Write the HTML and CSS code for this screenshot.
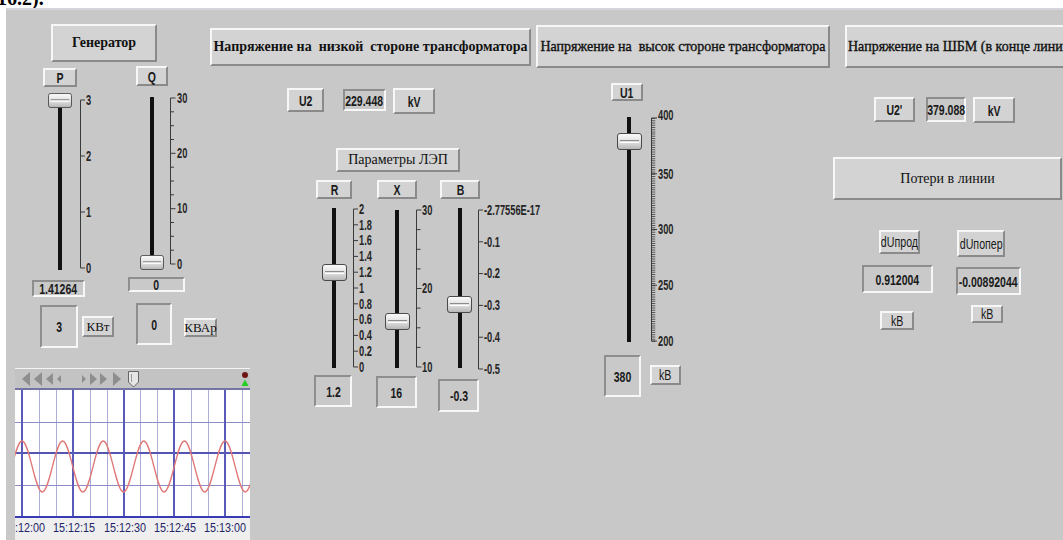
FILE: index.html
```html
<!DOCTYPE html>
<html lang="ru">
<head>
<meta charset="utf-8">
<title>Линия электропередачи — лицевая панель</title>
<link rel="stylesheet" href="styles.css">
</head>
<body>
<svg class="defs" width="0" height="0" aria-hidden="true">
  <defs>
    <linearGradient id="thumbFill" x1="0" y1="0" x2="0" y2="1">
      <stop offset="0" stop-color="#fbfbfb"/>
      <stop offset="0.55" stop-color="#dedede"/>
      <stop offset="1" stop-color="#b4b4b4"/>
    </linearGradient>
    <symbol id="thumb" viewBox="0 0 25 17" preserveAspectRatio="none">
      <rect x="0.5" y="0.5" width="24" height="16" rx="2.5" fill="url(#thumbFill)" stroke="#4a4a4a"/>
      <line x1="3" y1="7.5" x2="22" y2="7.5" stroke="#8c8c8c"/>
      <line x1="3" y1="9.5" x2="22" y2="9.5" stroke="#ffffff"/>
    </symbol>
  </defs>
</svg>

<div class="strip"><span class="fig-ref">16.2).</span></div>

<main class="panel">
  <!-- Generator: P and Q sliders, inputs and trend chart -->
  <section class="col col-gen">
    <div class="raised serif b gen-title">Генератор</div>

    <div class="gen-sliders">
      <div class="unit unit-p">
        <div class="raised narrow b tag-p"><span>P</span></div>
        <svg class="slider slider-p" width="60" height="185" viewBox="0 0 60 185">
          <line class="track" x1="20" y1="5" x2="20" y2="180"/>
          <g class="scale">
            <path d="M40.5 10V178M40.5 10H45M40.5 66H45M40.5 122H45M40.5 178H45"/>
            <text x="46" y="10">3</text>
            <text x="46" y="66">2</text>
            <text x="46" y="122">1</text>
            <text x="46" y="178">0</text>
          </g>
          <use href="#thumb" x="8" y="3" width="24" height="15"/>
        </svg>
        <div class="sunken narrow b val-p"><span>1.41264</span></div>
      </div>

      <div class="unit unit-q">
        <div class="raised narrow b tag-q"><span>Q</span></div>
        <svg class="slider slider-q" width="65" height="185" viewBox="0 0 65 185">
          <line class="track" x1="22" y1="7" x2="22" y2="172"/>
          <g class="scale">
            <path d="M40.5 8V174M40.5 8H45.5M40.5 63.3H45.5M40.5 118.7H45.5M40.5 174H45.5M40.5 21.8H44M40.5 35.7H44M40.5 49.5H44M40.5 77.2H44M40.5 91H44M40.5 104.8H44M40.5 132.5H44M40.5 146.3H44M40.5 160.2H44"/>
            <text x="47" y="8">30</text>
            <text x="47" y="63.3">20</text>
            <text x="47" y="118.7">10</text>
            <text x="47" y="174">0</text>
          </g>
          <use href="#thumb" x="10" y="165" width="24" height="15"/>
        </svg>
        <div class="sunken narrow b val-q"><span>0</span></div>
      </div>
    </div>

    <div class="gen-inputs">
      <div class="sunken narrow b in-p"><span>3</span></div>
      <div class="raised serif unit-kvt">КВт</div>
      <div class="sunken narrow b in-q"><span>0</span></div>
      <div class="raised serif unit-kvar">КВАр</div>
    </div>

    <div class="chart">
      <svg class="chart-bar" width="235" height="22" viewBox="0 0 235 22">
        <rect width="235" height="22" fill="#c3c3c3"/>
        <line x1="0" y1="0.5" x2="235" y2="0.5" stroke="#f4f4f4"/>
        <line x1="0" y1="21" x2="235" y2="21" stroke="#7474a4" stroke-width="2"/>
        <g fill="#8e8e8e">
          <polygon points="15,4 7,11 15,18"/>
          <polygon points="27,4 19,11 27,18"/>
          <polygon points="38,5 31,11 38,17"/>
          <polygon points="46,7 42,11 46,15"/>
          <polygon points="67,7 71,11 67,15"/>
          <polygon points="75,5 82,11 75,17"/>
          <polygon points="85,5 92,11 85,17"/>
          <polygon points="98,4 106,11 98,18"/>
        </g>
        <polygon points="113.5,3.5 123.5,3.5 123.5,14 118.5,19 113.5,14" fill="#e6e6e6" stroke="#666"/>
        <line x1="116.5" y1="6" x2="116.5" y2="14" stroke="#999"/>
        <circle cx="230" cy="7" r="3" fill="#6e1414"/>
        <polygon points="226.5,18 230,11.5 233.5,18" fill="#22d022"/>
      </svg>
      <svg class="chart-plot" width="235" height="150" viewBox="0 0 235 150">
        <rect width="235" height="127" fill="#ffffff"/>
        <rect y="127" width="235" height="23" fill="#efefef"/>
        <g stroke="#adadd9" stroke-width="1">
          <line x1="24.5" y1="0" x2="24.5" y2="127"/>
          <line x1="41.5" y1="0" x2="41.5" y2="127"/>
          <line x1="75.5" y1="0" x2="75.5" y2="127"/>
          <line x1="92.5" y1="0" x2="92.5" y2="127"/>
          <line x1="125.5" y1="0" x2="125.5" y2="127"/>
          <line x1="142.5" y1="0" x2="142.5" y2="127"/>
          <line x1="176.5" y1="0" x2="176.5" y2="127"/>
          <line x1="193.5" y1="0" x2="193.5" y2="127"/>
          <line x1="227.5" y1="0" x2="227.5" y2="127"/>
        </g>
        <g stroke="#8c8cc6" stroke-width="1">
          <line x1="0" y1="32.5" x2="235" y2="32.5"/>
          <line x1="0" y1="95.5" x2="235" y2="95.5"/>
        </g>
        <line x1="0" y1="63" x2="235" y2="63" stroke="#5454b2" stroke-width="2"/>
        <g stroke="#5a5ab8" stroke-width="2">
          <line x1="7" y1="0" x2="7" y2="127"/>
          <line x1="58" y1="0" x2="58" y2="127"/>
          <line x1="109" y1="0" x2="109" y2="127"/>
          <line x1="159" y1="0" x2="159" y2="127"/>
          <line x1="210" y1="0" x2="210" y2="127"/>
        </g>
        <path class="wave" d="M-13.3 102C-5.91 102-0.39 51 7 51S19.91 102 27.3 102S40.21 51 47.6 51S60.51 102 67.9 102S80.81 51 88.2 51S101.11 102 108.5 102S121.41 51 128.8 51S141.71 102 149.1 102S162.01 51 169.4 51S182.31 102 189.7 102S202.61 51 210 51S222.91 102 230.3 102S243.21 51 250.6 51"/>
        <line x1="0" y1="127" x2="235" y2="127" stroke="#3a3ab4" stroke-width="2"/>
        <g class="time">
          <text x="9" y="138">15:12:00</text>
          <text x="59" y="138">15:12:15</text>
          <text x="110" y="138">15:12:30</text>
          <text x="160" y="138">15:12:45</text>
          <text x="210" y="138">15:13:00</text>
        </g>
      </svg>
    </div>
  </section>

  <!-- Low-voltage side of the transformer and line parameters -->
  <section class="col col-low">
    <div class="raised serif b hdr-low">Напряжение на  низкой  стороне трансформатора</div>
    <div class="u2-row">
      <div class="raised narrow b tag-u2"><span>U2</span></div>
      <div class="sunken narrow b val-u2"><span>229.448</span></div>
      <div class="raised narrow b unit-kv"><span>kV</span></div>
    </div>
    <div class="raised serif params">Параметры ЛЭП</div>
    <div class="rxb">
      <div class="unit unit-r">
        <div class="raised narrow b tag-r"><span>R</span></div>
        <svg class="slider slider-r" width="56" height="170" viewBox="0 0 56 170">
          <line class="track" x1="14" y1="5" x2="14" y2="165"/>
          <g class="scale">
            <path d="M33.5 6V164M33.5 6H38M33.5 21.8H38M33.5 37.6H38M33.5 53.4H38M33.5 69.2H38M33.5 85H38M33.5 100.8H38M33.5 116.6H38M33.5 132.4H38M33.5 148.2H38M33.5 164H38"/>
            <text x="39" y="6">2</text>
            <text x="39" y="21.8">1.8</text>
            <text x="39" y="37.6">1.6</text>
            <text x="39" y="53.4">1.4</text>
            <text x="39" y="69.2">1.2</text>
            <text x="39" y="85">1</text>
            <text x="39" y="100.8">0.8</text>
            <text x="39" y="116.6">0.6</text>
            <text x="39" y="132.4">0.4</text>
            <text x="39" y="148.2">0.2</text>
            <text x="39" y="164">0</text>
          </g>
          <use href="#thumb" x="2" y="61" width="25" height="17"/>
        </svg>
        <div class="sunken narrow b val-r"><span>1.2</span></div>
      </div>
      <div class="unit unit-x">
        <div class="raised narrow b tag-x"><span>X</span></div>
        <svg class="slider slider-x" width="56" height="170" viewBox="0 0 56 170">
          <line class="track" x1="14" y1="7" x2="14" y2="165"/>
          <g class="scale">
            <path d="M33.5 7V164M33.5 7H38.5M33.5 85.5H38.5M33.5 164H38.5M33.5 26.6H37.5M33.5 46.3H37.5M33.5 65.9H37.5M33.5 105.1H37.5M33.5 124.8H37.5M33.5 144.4H37.5"/>
            <text x="39" y="7">30</text>
            <text x="39" y="85.5">20</text>
            <text x="39" y="164">10</text>
          </g>
          <use href="#thumb" x="2" y="110" width="25" height="17"/>
        </svg>
        <div class="sunken narrow b val-x"><span>16</span></div>
      </div>
      <div class="unit unit-b">
        <div class="raised narrow b tag-b"><span>B</span></div>
        <svg class="slider slider-b" width="95" height="172" viewBox="0 0 95 172">
          <line class="track" x1="14" y1="5" x2="14" y2="165"/>
          <g class="scale">
            <path d="M32.5 7V166M32.5 7H37M32.5 38.8H37M32.5 70.6H37M32.5 102.4H37M32.5 134.2H37M32.5 166H37"/>
            <text x="38" y="7">-2.77556E-17</text>
            <text x="38" y="38.8">-0.1</text>
            <text x="38" y="70.6">-0.2</text>
            <text x="38" y="102.4">-0.3</text>
            <text x="38" y="134.2">-0.4</text>
            <text x="38" y="166">-0.5</text>
          </g>
          <use href="#thumb" x="1" y="93" width="25" height="17"/>
        </svg>
        <div class="sunken narrow b val-b"><span>-0.3</span></div>
      </div>
    </div>
  </section>

  <!-- High-voltage side of the transformer -->
  <section class="col col-high">
    <div class="raised serif heavy hdr-high">Напряжение на  высок стороне трансформатора</div>
    <div class="raised narrow b tag-u1"><span>U1</span></div>
    <svg class="slider slider-u1" width="75" height="240" viewBox="0 0 75 240">
      <line class="track" x1="19" y1="7" x2="19" y2="232"/>
      <g class="scale">
        <line class="comb" x1="43.5" y1="8" x2="43.5" y2="232"/>
        <path d="M41.5 8V231M41.5 8H47M41.5 63.75H47M41.5 119.5H47M41.5 175.25H47M41.5 231H47"/>
        <text x="48" y="5">400</text>
        <text x="48" y="63.75">350</text>
        <text x="48" y="119.5">300</text>
        <text x="48" y="175.25">250</text>
        <text x="48" y="231">200</text>
      </g>
      <use href="#thumb" x="7" y="23" width="25" height="17"/>
    </svg>
    <div class="u1-row">
      <div class="sunken narrow b val-u1"><span>380</span></div>
      <div class="raised narrow thin unit-kb1"><span>kB</span></div>
    </div>
  </section>

  <!-- Bus voltage at the end of the line and line losses -->
  <section class="col col-end">
    <div class="raised serif heavy hdr-end">Напряжение на ШБМ (в конце линии)</div>
    <div class="u2p-row">
      <div class="raised narrow b tag-u2p"><span>U2'</span></div>
      <div class="sunken narrow b val-u2p"><span>379.088</span></div>
      <div class="raised narrow b unit-kv2"><span>kV</span></div>
    </div>
    <div class="raised serif losses">Потери в линии</div>
    <div class="du">
      <div class="du-col du-a">
        <div class="raised narrow thin tag-dua"><span>dUпрод</span></div>
        <div class="sunken narrow b val-dua"><span>0.912004</span></div>
        <div class="raised narrow thin unit-kba"><span>kB</span></div>
      </div>
      <div class="du-col du-b">
        <div class="raised narrow thin tag-dub"><span>dUпопер</span></div>
        <div class="sunken narrow b val-dub"><span>-0.00892044</span></div>
        <div class="raised narrow thin unit-kbb"><span>kB</span></div>
      </div>
    </div>
  </section>
</main>
</body>
</html>
```

FILE: styles.css
```css
* { box-sizing: border-box; }

html, body {
  margin: 0;
  background: #ffffff;
  overflow: hidden;
}

body {
  width: 1063px;
  height: 540px;
}

.defs {
  display: block;
  width: 0;
  height: 0;
  overflow: hidden;
}

/* tail of the caption above the panel */
.strip {
  height: 8px;
  overflow: hidden;
}

.fig-ref {
  display: block;
  margin: -12px 0 0 -3px;
  font: bold 20px/20px "Liberation Serif", serif;
  color: #000;
}

/* front panel */
.panel {
  display: flex;
  margin-left: 6px;
  height: 532px;
  background: #c8c8c8;
  box-shadow: inset 0 2px 0 #d4d4dc;
}

.col {
  display: flex;
  flex-direction: column;
  align-items: flex-start;
  flex-shrink: 0;
}

.col-gen  { width: 202px; }
.col-low  { width: 326px; }
.col-high { width: 298px; }
.col-end  { width: 231px; }

/* control frames */
.raised {
  display: flex;
  align-items: center;
  justify-content: center;
  flex-shrink: 0;
  white-space: nowrap;
  background: #d3d3d3;
  border: 2px solid;
  border-color: #f7f7f7 #8a8a8a #8a8a8a #f7f7f7;
}

.sunken {
  display: flex;
  align-items: center;
  justify-content: center;
  flex-shrink: 0;
  white-space: nowrap;
  background: #c9c9c9;
  border: 2px solid;
  border-color: #8e8e8e #f7f7f7 #f7f7f7 #8e8e8e;
}

.serif {
  font-family: "Liberation Serif", "Times New Roman", serif;
  font-size: 14px;
  color: #111;
}

.heavy {
  -webkit-text-stroke: 0.35px #111;
}

/* narrow sans: Arial metrics squeezed horizontally */
.narrow {
  font-family: "Liberation Sans", Arial, sans-serif;
  font-size: 15px;
  color: #1a1a1a;
}

.narrow > span {
  display: inline-block;
  transform: scaleX(0.7);
}

.narrow.thin {
  font-size: 14px;
}

.narrow.thin > span {
  transform: scaleX(0.76);
}

.b { font-weight: bold; }

/* sliders */
.slider {
  display: block;
  flex-shrink: 0;
  overflow: visible;
}

.track {
  stroke: #111;
  stroke-width: 4;
}

.scale path {
  fill: none;
  stroke: #3a3a3a;
  stroke-width: 1;
}

.scale .comb {
  stroke: #555;
  stroke-width: 3.5;
  stroke-dasharray: 1 1.23;
}

.scale text {
  font-family: "Liberation Sans", Arial, sans-serif;
  font-size: 14.5px;
  font-weight: bold;
  fill: #262626;
  dominant-baseline: central;
  transform-box: fill-box;
  transform-origin: 0 50%;
  transform: scaleX(0.64);
}

.unit {
  display: flex;
  flex-direction: column;
  align-items: flex-start;
  flex-shrink: 0;
}

/* generator column */
.gen-title {
  margin: 16px 0 0 45px;
  width: 106px;
  height: 38px;
  font-size: 14px;
}

.gen-sliders {
  display: flex;
  align-items: flex-start;
  margin-top: 4px;
}

.unit-p { margin-left: 26px; width: 68px; }
.tag-p  { margin: 2px 0 0 11px; width: 34px; height: 19px; }
.slider-p { margin: 3px 0 0 8px; }
.val-p  { margin-top: 5px; width: 53px; height: 17px; }

.unit-q { margin-left: 28px; width: 67px; }
.tag-q  { margin: 0 0 0 8px; width: 32px; height: 20px; }
.slider-q { margin: 4px 0 0 2px; }
.val-q  { margin-top: 2px; width: 57px; height: 15px; }

.gen-inputs {
  display: flex;
  align-items: flex-start;
  margin-top: 6px;
}

.in-p      { margin: 2px 0 0 34px; width: 38px; height: 43px; }
.unit-kvt  { margin: 13px 0 0 4px; width: 32px; height: 21px; font-size: 13px; }
.in-q      { margin: 0 0 0 22px; width: 36px; height: 42px; }
.unit-kvar { margin: 15px 0 0 12px; width: 33px; height: 19px; font-size: 13px; }

/* trend chart */
.chart {
  display: flex;
  flex-direction: column;
  flex-shrink: 0;
  margin: 20px 0 0 9px;
  width: 235px;
  height: 172px;
}

.chart svg { display: block; }

.wave {
  fill: none;
  stroke: #e07878;
  stroke-width: 1.3;
}

.time text {
  font-family: "Liberation Sans", Arial, sans-serif;
  font-size: 13.5px;
  fill: #1e2466;
  text-anchor: middle;
  dominant-baseline: central;
  transform-box: fill-box;
  transform-origin: 50% 50%;
  transform: scaleX(0.8);
}

/* low-voltage column */
.hdr-low {
  margin: 20px 0 0 2px;
  width: 321px;
  height: 38px;
  white-space: pre;
}

.u2-row {
  display: flex;
  align-items: flex-start;
  margin: 22px 0 0 79px;
}

.tag-u2  { width: 37px; height: 24px; }
.val-u2  { margin: 1px 0 0 19px; width: 43px; height: 22px; }
.unit-kv { margin-left: 7px; width: 42px; height: 26px; }

.params {
  margin: 34px 0 0 128px;
  width: 124px;
  height: 24px;
}

.rxb {
  display: flex;
  align-items: flex-start;
  margin: 8px 0 0 106px;
}

.unit-r { width: 62px; }
.tag-r  { margin-left: 2px; width: 36px; height: 19px; }
.slider-r { margin: 4px 0 0 6px; }
.val-r  { margin-top: 2px; width: 38px; height: 32px; }

.unit-x { width: 62px; }
.tag-x  { margin-left: 1px; width: 40px; height: 19px; }
.slider-x { margin: 4px 0 0 7px; }
.val-x  { margin-top: 3px; width: 41px; height: 32px; }

.unit-b { width: 100px; }
.tag-b  { margin-left: 2px; width: 40px; height: 19px; }
.slider-b { margin: 4px 0 0 8px; }
.val-b  { margin-top: 4px; width: 41px; height: 33px; }

/* high-voltage column */
.hdr-high {
  margin: 17px 0 0 2px;
  width: 294px;
  height: 43px;
  white-space: pre;
}

.tag-u1 { margin: 15px 0 0 77px; width: 32px; height: 18px; }
.slider-u1 { margin: 9px 0 0 76px; }

.u1-row {
  display: flex;
  align-items: flex-start;
  margin: 5px 0 0 70px;
}

.val-u1   { width: 37px; height: 42px; }
.unit-kb1 { margin: 10px 0 0 9px; width: 31px; height: 20px; }

/* end-of-line column */
.hdr-end {
  margin: 17px 0 0 13px;
  width: 240px;
  height: 43px;
  justify-content: flex-start;
  padding-left: 1px;
}

.u2p-row {
  display: flex;
  align-items: flex-start;
  margin: 29px 0 0 42px;
}

.tag-u2p  { width: 41px; height: 25px; }
.val-u2p  { margin-left: 11px; width: 40px; height: 25px; }
.unit-kv2 { margin-left: 7px; width: 42px; height: 26px; }

.losses {
  margin: 34px 0 0 1px;
  width: 229px;
  height: 43px;
}

.du {
  display: flex;
  align-items: flex-start;
  margin: 30px 0 0 30px;
}

.du-col {
  display: flex;
  flex-direction: column;
  align-items: flex-start;
}

.du-a { width: 71px; }
.tag-dua  { margin-left: 17px; width: 41px; height: 24px; }
.val-dua  { margin-top: 11px; width: 71px; height: 28px; }
.unit-kba { margin: 18px 0 0 18px; width: 34px; height: 19px; }

.du-b { margin-left: 23px; }
.tag-dub  { margin-left: 1px; width: 48px; height: 27px; }
.val-dub  { margin-top: 10px; width: 65px; height: 28px; }
.unit-kbb { margin: 10px 0 0 15px; width: 32px; height: 18px; }
```
